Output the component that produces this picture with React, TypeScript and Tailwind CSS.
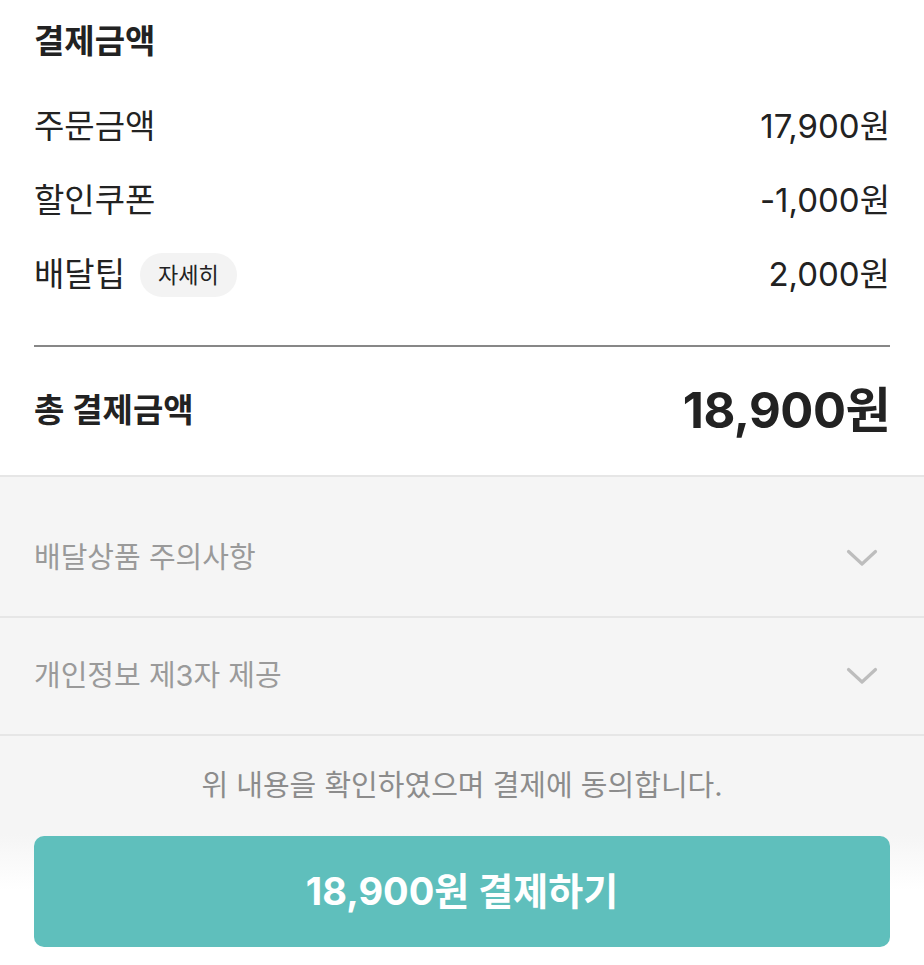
const rows = [
    { label: "주문금액", value: "17,900원" },
    { label: "할인쿠폰", value: "-1,000원" },
    { label: "배달팁", value: "2,000원", chip: "자세히" },
]

const notices = ["배달상품 주의사항", "개인정보 제3자 제공"]

function Chevron() {
    return (
        <svg width="32" height="18" viewBox="0 0 32 18" fill="none" className="mr-[12px]">
            <path d="M2.5 2.5 16 15 29.5 2.5" stroke="#bdbdbd" strokeWidth="3.2" strokeLinecap="round" strokeLinejoin="round" />
        </svg>
    )
}

export default function App() {
    return (
        <div
            className="w-[924px] h-[965px] overflow-hidden bg-white text-[#222]"
            style={{ fontFamily: 'Inter, "Noto Sans CJK KR", sans-serif' }}
        >
            {/* Payment summary */}
            <section className="px-[34px]">
                <h2 className="h-[90px] pb-[6px] flex items-center text-[33px] font-bold">결제금액</h2>
                {rows.map((row) => (
                    <div key={row.label} className="h-[74px] flex items-center justify-between">
                        <div className="flex items-center gap-[15px]">
                            <span className="text-[33px]">{row.label}</span>
                            {row.chip && (
                                <span className="h-[44px] px-[18px] flex items-center rounded-full bg-[#f3f3f3] text-[22px]">
                                    {row.chip}
                                </span>
                            )}
                        </div>
                        <span className="text-[33px]">{row.value}</span>
                    </div>
                ))}
                <div className="mt-[33px] h-[2px] bg-[#878787]" />
                <div className="h-[128px] flex items-center justify-between">
                    <span className="text-[33px] font-bold">총 결제금액</span>
                    <span className="text-[49px] font-bold tracking-[-0.5px]">18,900원</span>
                </div>
            </section>

            {/* Notices */}
            <section className="bg-[#f5f5f5] border-t-2 border-[#e6e6e6] pt-[23px]">
                {notices.map((n) => (
                    <div
                        key={n}
                        className="h-[118px] px-[34px] flex items-center justify-between border-b-2 border-[#e6e6e6]"
                    >
                        <span className="text-[29px] text-[#9a9a9a]">{n}</span>
                        <Chevron />
                    </div>
                ))}
                <p className="h-[98px] pt-[28px] text-center text-[29px] text-[#8c8c8c]">
                    위 내용을 확인하였으며 결제에 동의합니다.
                </p>
            </section>

            {/* Pay button */}
            <div className="px-[34px] pt-[2px] bg-gradient-to-b from-[#f5f5f5] to-white to-50%">
                <button className="w-full h-[111px] rounded-[10px] bg-[#5fbfbc] text-white text-[38px] font-bold">
                    18,900원 결제하기
                </button>
            </div>
        </div>
    )
}
